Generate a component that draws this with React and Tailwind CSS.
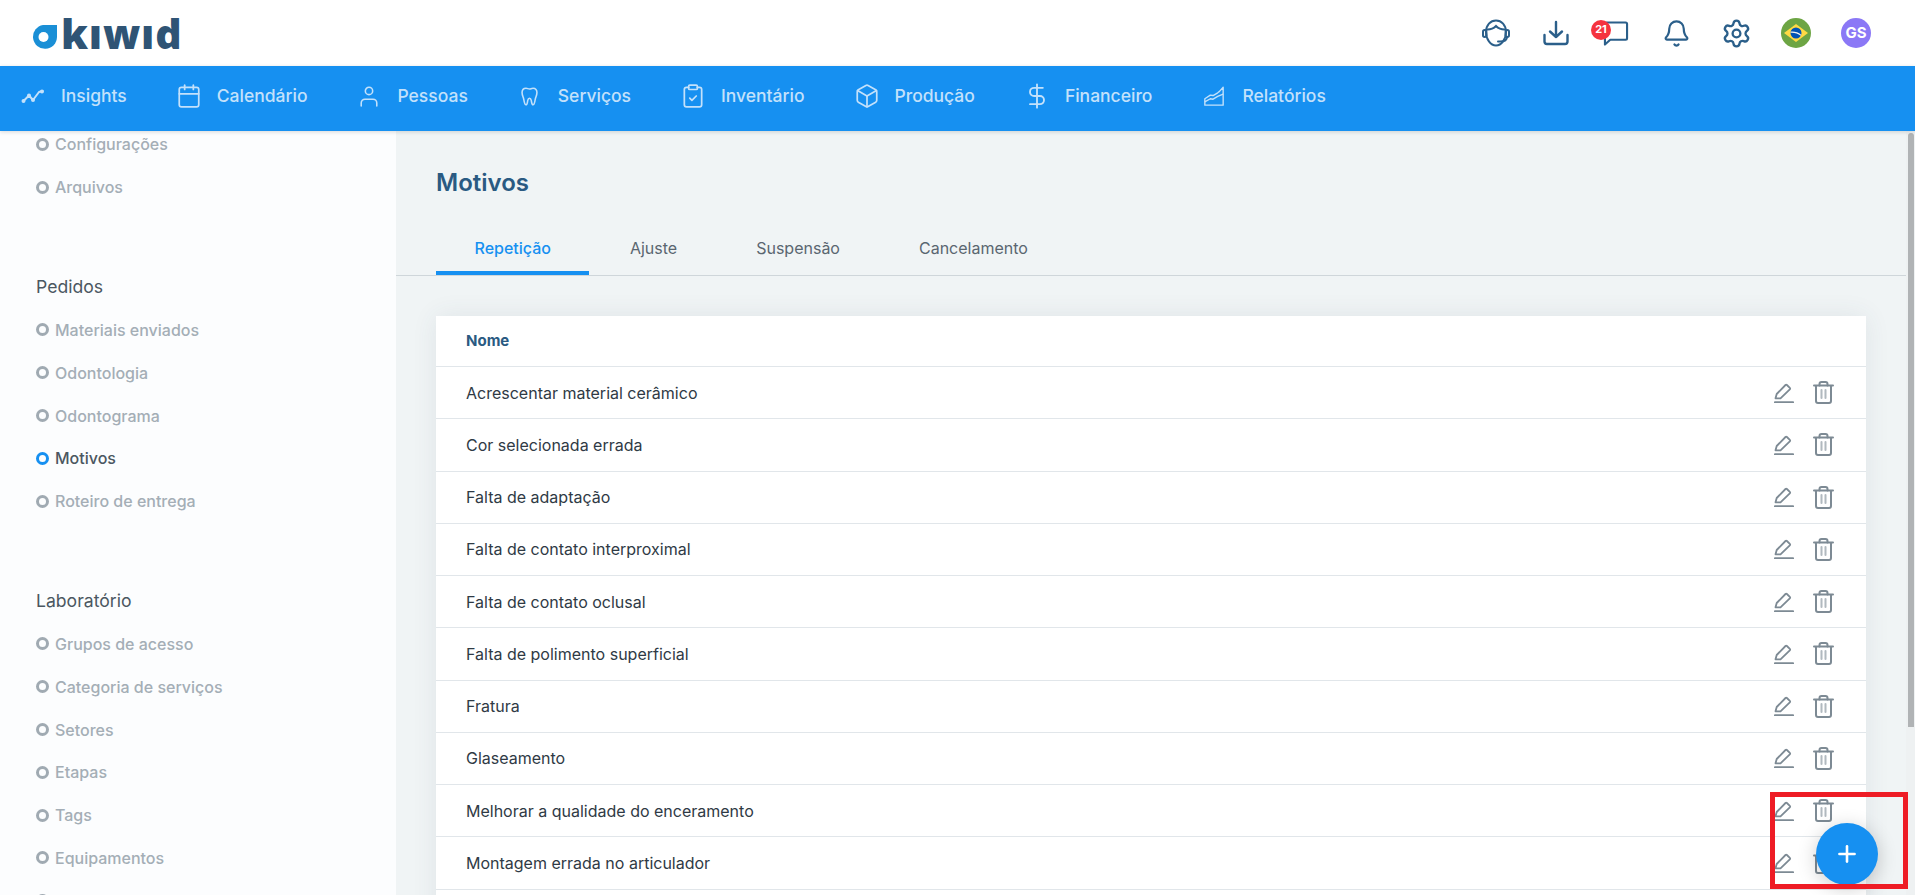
import React from "react";
import { Calendar, ClipboardCheck, Box, DollarSign, Bell, Settings, Plus } from "lucide-react";

const sidebarGroups = [
  { items: ["Configurações", "Arquivos"] },
  { title: "Pedidos", items: ["Materiais enviados", "Odontologia", "Odontograma", "Motivos", "Roteiro de entrega"] },
  { title: "Laboratório", items: ["Grupos de acesso", "Categoria de serviços", "Setores", "Etapas", "Tags", "Equipamentos", "Condições de entrega"] },
];

const motivos = [
  "Acrescentar material cerâmico",
  "Cor selecionada errada",
  "Falta de adaptação",
  "Falta de contato interproximal",
  "Falta de contato oclusal",
  "Falta de polimento superficial",
  "Fratura",
  "Glaseamento",
  "Melhorar a qualidade do enceramento",
  "Montagem errada no articulador",
];

const tabs = ["Repetição", "Ajuste", "Suspensão", "Cancelamento"];

function InsightsIcon(props) {
  return (
    <svg viewBox="0 0 24 24" fill="none" stroke="currentColor" strokeWidth="2" strokeLinecap="round" strokeLinejoin="round" {...props}>
      <path d="M2.5 17 8 11.5l4 4.5 6-8 3.5-1" />
      <circle cx="2.5" cy="17" r="1" fill="currentColor" />
      <circle cx="8" cy="11.5" r="1" fill="currentColor" />
      <circle cx="12" cy="16" r="1" fill="currentColor" />
      <circle cx="21" cy="7.5" r="1" fill="currentColor" />
    </svg>
  );
}

function PersonIcon(props) {
  return (
    <svg viewBox="0 0 24 24" fill="none" stroke="currentColor" strokeWidth="1.7" strokeLinecap="round" {...props}>
      <circle cx="12" cy="6.5" r="4" />
      <path d="M3.5 23v-3.5a4 4 0 0 1 4-4h9a4 4 0 0 1 4 4V23" />
    </svg>
  );
}

function ToothIcon(props) {
  return (
    <svg viewBox="0 0 24 24" fill="none" stroke="currentColor" strokeWidth="1.8" strokeLinejoin="round" {...props}>
      <path d="M8 2.5c-3 0-4.500 2-4.500 5 0 3.500 1.500 5 2 8 .5 3 1 6 2.500 6s1.500-2.500 2-5c.3-1.500.8-2.500 2-2.500s1.700 1 2 2.500c.5 2.500.7 5 2 5s2-3 2.500-6c.5-3 2-4.500 2-8 0-3-1.500-5-4.500-5-2 0-2.500 1-4 1s-2.500-1-4-1z" />
    </svg>
  );
}

function ChartIcon(props) {
  return (
    <svg viewBox="0 0 24 24" fill="none" stroke="currentColor" strokeWidth="1.500" strokeLinejoin="round" {...props}>
      <path d="M2 22V15l6-4 3 .5 5-3 2-1.500 4-4.500V22z" />
      <path d="M2 18.500l6-3.500 3 .5 5-3 6-2.500" />
    </svg>
  );
}

function HeadsetIcon(props) {
  return (
    <svg viewBox="0 0 28 28" fill="none" stroke="currentColor" strokeWidth="2" strokeLinecap="round" {...props}>
      <path d="M4 13C4 6 8.500 1.500 14 1.500S24 6 24 13c0 7-4.500 13.500-10 13.500S4 20 4 13z" />
      <path d="M4.500 10.500c4 .3 7-1 9.500-3.500 2.500 2.500 5.500 3.800 9.500 3.500" />
      <rect x="1" y="11" width="3.400" height="7" rx="1.700" />
      <rect x="23.600" y="11" width="3.400" height="7" rx="1.700" />
      <path d="M25 18c0 3-3 4.500-7 4.500h-2" />
    </svg>
  );
}

function DownloadIcon(props) {
  return (
    <svg viewBox="0 0 26 26" fill="none" stroke="currentColor" strokeWidth="2.4" strokeLinecap="round" strokeLinejoin="round" {...props}>
      <path d="M13 2v15M7 11.500l6 5.500 6-5.500" />
      <path d="M1.500 15v6.500a2.500 2.500 0 0 0 2.500 2.500h18a2.500 2.500 0 0 0 2.500-2.500V15" />
    </svg>
  );
}

function ChatIcon(props) {
  return (
    <svg viewBox="0 0 26 26" fill="none" stroke="currentColor" strokeWidth="2.2" strokeLinejoin="round" {...props}>
      <path d="M3 1.500h20a1.500 1.500 0 0 1 1.500 1.500v15a1.500 1.500 0 0 1-1.500 1.500H7L1.500 24.500V3A1.500 1.500 0 0 1 3 1.500z" />
    </svg>
  );
}

function BrazilFlag() {
  return (
    <svg viewBox="0 0 30 30" className="h-[30px] w-[30px]">
      <circle cx="15" cy="15" r="15" fill="#6da544" />
      <path d="M15 6 27 15 15 24 3 15z" fill="#ffda44" />
      <circle cx="15" cy="15" r="5.500" fill="#0052b4" />
      <path d="M9.700 13.700c3.800-.4 7.700.7 10.500 3l-.5 1c-2.800-2.200-6.400-3.200-10.200-2.900z" fill="#f0f0f0" />
    </svg>
  );
}

function PencilIcon(props) {
  return (
    <svg viewBox="0 0 20 20" fill="none" stroke="currentColor" strokeWidth="1.800" strokeLinejoin="round" strokeLinecap="round" {...props}>
      <path d="M1.500 15.300l1.200-4.300L11.500 2a1 1 0 0 1 1.400 0l2.900 2.900a1 1 0 0 1 0 1.400L6.500 15.300z" />
      <path d="M.8 19.200h18.400" />
    </svg>
  );
}

function TrashIcon(props) {
  return (
    <svg viewBox="0 0 21 23" fill="none" stroke="currentColor" strokeWidth="2" strokeLinecap="round" strokeLinejoin="round" {...props}>
      <path d="M1 4.500h19M3 4.500V20a2 2 0 0 0 2 2h11a2 2 0 0 0 2-2V4.500" />
      <path d="M6.500 4.500V3a2 2 0 0 1 2-2h4a2 2 0 0 1 2 2v1.500" />
      <path d="M8.500 9v8M12.500 9v8" strokeOpacity="0.6" />
    </svg>
  );
}

function TopIcon({ children }) {
  return <div className="relative flex w-[60px] items-center justify-center text-[#2b5f8a]">{children}</div>;
}

function NavItem({ icon, label }) {
  return (
    <a className="flex items-center gap-[16px] text-[17.5px] font-medium text-[#c3e1fb]">
      <span className="flex h-6 w-6 items-center justify-center">{icon}</span>
      {label}
    </a>
  );
}

function SidebarItem({ label }) {
  const active = label === "Motivos";
  return (
    <li className={`flex h-[42.8px] items-center gap-[6px] text-[16px] font-medium ${active ? "text-[#4b5761]" : "text-[#a4aeb6]"}`}>
      <span className={`h-[13px] w-[13px] rounded-full border-[3px] ${active ? "border-[#1690f1]" : "border-[#a0aab2]"}`} />
      {label}
    </li>
  );
}

export default function App() {
  return (
    <div className="relative flex h-screen flex-col overflow-hidden bg-white font-['Inter',sans-serif]">
      <header className="flex h-[66px] shrink-0 items-center justify-between pl-[31px] pr-[29px]">
        <div className="flex items-start gap-[4px]">
          <svg viewBox="0 0 26 24" className="mt-[12px] h-6 w-[26px]">
            <path d="M12 0h14v12A12 12 0 1 1 12 0z" fill="#1a8fd6" />
            <circle cx="12.500" cy="12" r="5" fill="#ffffff" />
          </svg>
          <span className="font-['Open_Sans',sans-serif] text-[41px] leading-none font-extrabold tracking-[0.8px] text-[#2f5475]">kıwıd</span>
        </div>
        <div className="flex items-center">
          <TopIcon><HeadsetIcon className="h-7 w-7" /></TopIcon>
          <TopIcon><DownloadIcon className="h-[26px] w-[26px]" /></TopIcon>
          <TopIcon>
            <ChatIcon className="h-[25px] w-[26px]" />
            <span className="absolute top-[-1px] left-[5px] flex h-5 w-5 items-center justify-center rounded-full bg-[#f5333f] text-[11px] font-bold text-white">21</span>
          </TopIcon>
          <TopIcon><Bell className="h-[29px] w-[29px]" strokeWidth={1.8} /></TopIcon>
          <TopIcon><Settings className="h-[31px] w-[31px]" strokeWidth={1.8} /></TopIcon>
          <TopIcon><BrazilFlag /></TopIcon>
          <TopIcon>
            <span className="flex h-[30px] w-[30px] items-center justify-center rounded-full bg-[#8b78f6] text-[15px] font-bold text-white">GS</span>
          </TopIcon>
        </div>
      </header>

      <nav className="relative z-10 flex h-[65px] shrink-0 items-center gap-[50px] bg-[#1690f1] pb-[5px] pl-[21px] shadow-[0_1px_4px_rgba(0,0,0,0.15)]">
        <NavItem icon={<InsightsIcon className="h-6 w-6" />} label="Insights" />
        <NavItem icon={<Calendar className="h-[26px] w-[26px] shrink-0" strokeWidth={1.6} />} label="Calendário" />
        <NavItem icon={<PersonIcon className="h-[22px] w-[22px]" />} label="Pessoas" />
        <NavItem icon={<ToothIcon className="h-[21px] w-[21px]" />} label="Serviços" />
        <NavItem icon={<ClipboardCheck className="h-[26px] w-[26px] shrink-0" strokeWidth={1.6} />} label="Inventário" />
        <NavItem icon={<Box className="h-[26px] w-[26px] shrink-0" strokeWidth={1.6} />} label="Produção" />
        <NavItem icon={<DollarSign className="h-7 w-7 shrink-0" strokeWidth={1.6} />} label="Financeiro" />
        <NavItem icon={<ChartIcon className="h-[22px] w-[22px]" />} label="Relatórios" />
      </nav>

      <div className="flex min-h-0 flex-1">
        {/* sidebar is scrolled a bit in the screenshot */}
        <aside className="w-[396px] shrink-0 overflow-hidden bg-[#fcfdfe] pl-[36px]">
          <div className="-mt-[8px]">
            {sidebarGroups.map((group, i) => (
              <div key={i} className={i > 0 ? "mt-[57px]" : ""}>
                {group.title && (
                  <h3 className="flex h-[43px] items-center text-[17.6px] font-normal text-[#4b5761]">{group.title}</h3>
                )}
                <ul>
                  {group.items.map((item) => (
                    <SidebarItem key={item} label={item} />
                  ))}
                </ul>
              </div>
            ))}
          </div>
        </aside>

        <main className="min-w-0 flex-1 overflow-hidden bg-[#f0f4f5]">
          <h1 className="pt-[36px] pl-[40px] text-[24px] leading-8 font-semibold text-[#2a5a82]">Motivos</h1>
          <div className="mt-[22px] flex gap-[2px] border-b border-[#cfd6da] pl-[40px]">
            {tabs.map((tab, i) => (
              <button
                key={tab}
                className={`h-[54px] border-b-4 px-[38.5px] pt-[4px] text-[16px] ${i === 0 ? "border-[#1690f1] font-medium text-[#1690f1]" : "border-transparent text-[#5a6670]"}`}
              >
                {tab}
              </button>
            ))}
          </div>

          <div className="mx-[40px] mt-[40px] bg-white shadow-[0_0_24px_rgba(60,80,100,0.09)]">
            <div className="flex h-[50px] items-center pl-[30px] text-[15px] font-bold text-[#2a5a82]">Nome</div>
            {motivos.map((motivo) => (
              <div key={motivo} className="flex h-[52.25px] items-center justify-between border-t border-[#e1e6ea] pr-[32px] pl-[30px] text-[16px] text-[#2f3a45]">
                <span>{motivo}</span>
                <div className="flex items-center gap-[19px] text-[#7d8a94]">
                  <PencilIcon className="h-5 w-5" />
                  <TrashIcon className="h-[23px] w-[21px]" />
                </div>
              </div>
            ))}
            {/* next row starts right at the fold */}
            <div className="h-[52.25px] border-t border-[#e1e6ea]" />
          </div>
        </main>

        {/* page scrollbar */}
        <div className="w-[9px] shrink-0 bg-[#eef1f2] pt-[2px] pl-[2px]">
          <div className="h-[594px] w-[6px] rounded-t-[3px] bg-[#b0b3b5]" />
        </div>
      </div>

      <button className="absolute right-[37px] bottom-[10px] z-20 flex h-[62px] w-[62px] items-center justify-center rounded-full bg-[#1690f1] text-white shadow-[0_4px_20px_rgba(0,0,0,0.2)]">
        <Plus className="h-[26px] w-[26px]" strokeWidth={2.4} />
      </button>
      {/* red annotation box from the original screenshot */}
      <div className="pointer-events-none absolute right-[7px] bottom-[6px] z-30 h-[97px] w-[138px] border-[5px] border-[#ee1c25]" />
    </div>
  );
}
